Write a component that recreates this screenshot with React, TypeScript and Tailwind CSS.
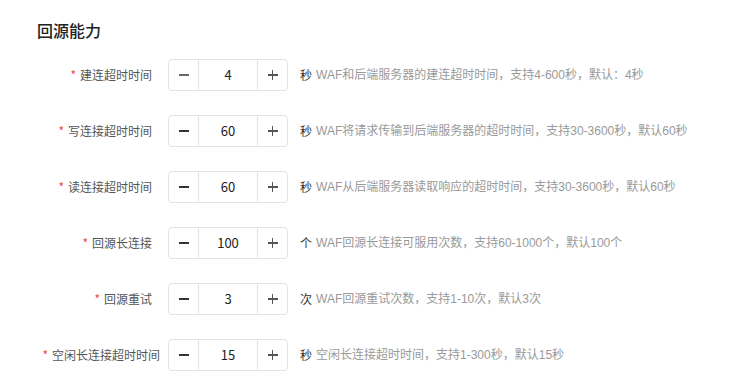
const rows = [
  { label: '建连超时时间', value: '4', unit: '秒', desc: 'WAF和后端服务器的建连超时时间，支持4-600秒，默认：4秒', minDisabled: true },
  { label: '写连接超时时间', value: '60', unit: '秒', desc: 'WAF将请求传输到后端服务器的超时时间，支持30-3600秒，默认60秒' },
  { label: '读连接超时时间', value: '60', unit: '秒', desc: 'WAF从后端服务器读取响应的超时时间，支持30-3600秒，默认60秒' },
  { label: '回源长连接', value: '100', unit: '个', desc: 'WAF回源长连接可服用次数，支持60-1000个，默认100个' },
  { label: '回源重试', value: '3', unit: '次', desc: 'WAF回源重试次数，支持1-10次，默认3次' },
  { label: '空闲长连接超时时间', value: '15', unit: '秒', desc: '空闲长连接超时时间，支持1-300秒，默认15秒', wide: true },
];

function Stepper({ value, minDisabled }: { value: string; minDisabled?: boolean }) {
  return (
    <div className="flex h-8 w-[120px] items-stretch rounded border border-[#e3e3e3] bg-white">
      <button className="flex w-[30px] items-center justify-center border-r border-[#e3e3e3]">
        <span className={`block h-[1.5px] w-[10px] ${minDisabled ? 'bg-[#666]' : 'bg-[#333]'}`} />
      </button>
      <div className="flex flex-1 items-center justify-center text-[13px] text-[#222]">{value}</div>
      <button className="relative flex w-[30px] items-center justify-center border-l border-[#e3e3e3]">
        <span className="absolute h-[1.5px] w-[10px] bg-[#555]" />
        <span className="absolute h-[10px] w-[1.5px] bg-[#555]" />
      </button>
    </div>
  );
}

export default function App() {
  return (
    <div
      className="h-[388px] w-[744px] bg-white pt-[19px]"
      style={{ fontFamily: '"Noto Sans CJK SC", "Noto Sans", sans-serif' }}
    >
      <h2 className="pl-[37px] text-[16px] font-medium leading-[22px] text-[#222]">回源能力</h2>
      <div className="mt-[18px] flex flex-col gap-6">
        {rows.map((r) => (
          <div key={r.label} className="flex h-8 items-center">
            <div className={`flex w-[168px] shrink-0 items-center justify-end ${r.wide ? 'pr-2' : 'pr-4'}`}>
              <span className="mr-1 text-[12px] leading-none text-[#f04545]">*</span>
              <span className="whitespace-nowrap text-[12px] text-[#555]">{r.label}</span>
            </div>
            <Stepper value={r.value} minDisabled={r.minDisabled} />
            <span className="ml-3 text-[12px] text-[#333]">{r.unit}</span>
            <span
              className="ml-1 whitespace-nowrap text-[12px] text-[#999]"
              style={{ fontFamily: '"Liberation Sans", "Noto Sans CJK SC", sans-serif' }}
            >
              {r.desc}
            </span>
          </div>
        ))}
      </div>
    </div>
  );
}
